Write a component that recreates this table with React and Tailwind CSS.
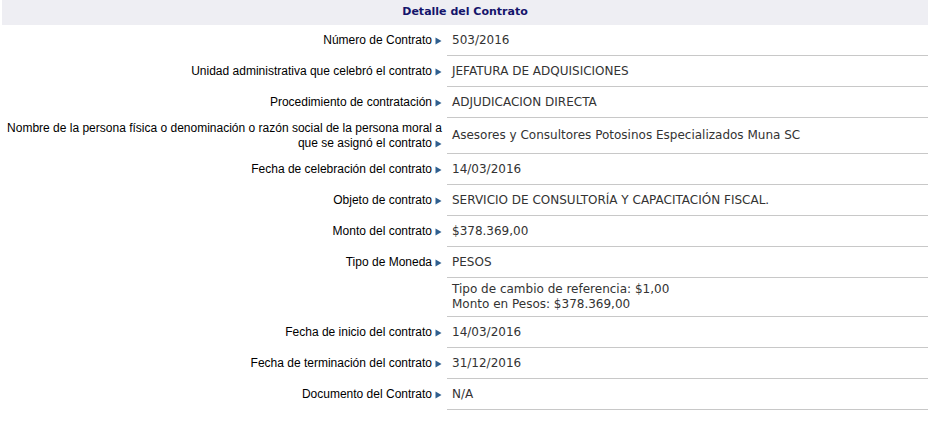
import React from "react"

const rows = [
    { label: "Número de Contrato", value: ["503/2016"] },
    { label: "Unidad administrativa que celebró el contrato", value: ["JEFATURA DE ADQUISICIONES"] },
    { label: "Procedimiento de contratación", value: ["ADJUDICACION DIRECTA"] },
    {
        label: "Nombre de la persona física o denominación o razón social de la persona moral a que se asignó el contrato",
        value: ["Asesores y Consultores Potosinos Especializados Muna SC"],
    },
    { label: "Fecha de celebración del contrato", value: ["14/03/2016"] },
    { label: "Objeto de contrato", value: ["SERVICIO DE CONSULTORÍA Y CAPACITACIÓN FISCAL."] },
    { label: "Monto del contrato", value: ["$378.369,00"] },
    { label: "Tipo de Moneda", value: ["PESOS"] },
    { label: "", value: ["Tipo de cambio de referencia: $1,00", "Monto en Pesos: $378.369,00"] },
    { label: "Fecha de inicio del contrato", value: ["14/03/2016"] },
    { label: "Fecha de terminación del contrato", value: ["31/12/2016"] },
    { label: "Documento del Contrato", value: ["N/A"] },
]

const Arrow = () => (
    <svg width="7" height="8" viewBox="0 0 7 8" className="inline-block ml-[3px] align-[-1px]">
        <path d="M0.5 0.5 L6.5 4 L0.5 7.5 Z" fill="#2f5f8f" />
    </svg>
)

export default function App() {
    return (
        <div className="bg-white w-[930px] h-[422px] px-[2px]">

            {/* Header */}
            <div className="h-[25px] bg-[#eeeef3] flex items-center justify-center">
                <span className="font-['DejaVu_Sans',sans-serif] font-bold text-[11px] text-[#14146b]">
                    Detalle del Contrato
                </span>
            </div>

            {/* Rows */}
            <div className="grid grid-cols-[445px_1fr]">
                {rows.map((row, i) => (
                    <React.Fragment key={i}>
                        <div className="flex items-center justify-end min-h-[31px] py-[3px] pl-[1px] pr-[5px] text-right font-['Liberation_Sans',Arial,sans-serif] text-[12px] leading-[15px] text-black">
                            {row.label && (
                                <span>
                                    {row.label}
                                    <Arrow />
                                </span>
                            )}
                        </div>
                        <div className="flex flex-col justify-center min-h-[31px] py-[4px] pl-[5px] border-b border-[#c8c8c8] font-['DejaVu_Sans',Verdana,sans-serif] text-[12px] leading-[15px] text-[#333]">
                            {row.value.map((v, j) => (
                                <div key={j}>{v}</div>
                            ))}
                        </div>
                    </React.Fragment>
                ))}
            </div>

        </div>
    )
}
